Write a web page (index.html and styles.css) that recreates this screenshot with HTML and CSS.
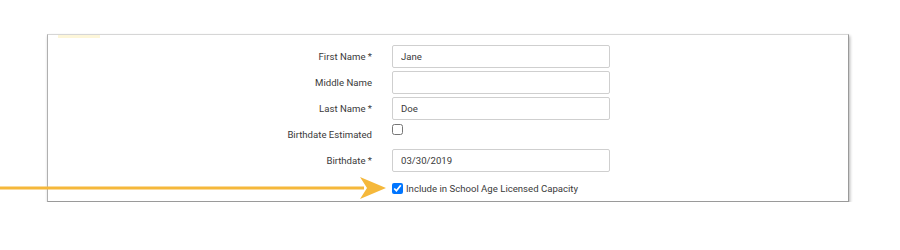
FILE: index.html
```html
<!DOCTYPE html>
<html lang="en">

<head>
    <meta charset="UTF-8">
    <meta name="viewport" content="width=device-width, initial-scale=1.0">
    <title>Child Details</title>
    <link rel="stylesheet" href="styles.css">
</head>

<body>
    <div class="card">
        <div class="tab-highlight"></div>

        <form class="child-form">
            <div class="form-row">
                <label for="firstName">First Name *</label>
                <input type="text" id="firstName" value="Jane">
            </div>
            <div class="form-row">
                <label for="middleName">Middle Name</label>
                <input type="text" id="middleName">
            </div>
            <div class="form-row">
                <label for="lastName">Last Name *</label>
                <input type="text" id="lastName" value="Doe">
            </div>
            <div class="form-row check-row">
                <label for="estimated">Birthdate Estimated</label>
                <input type="checkbox" id="estimated">
            </div>
            <div class="form-row">
                <label for="birthdate">Birthdate *</label>
                <input type="text" id="birthdate" value="03/30/2019">
            </div>
            <div class="form-row capacity-row">
                <span class="spacer"></span>
                <label class="inline-check">
                    <input type="checkbox" checked>
                    Include in School Age Licensed Capacity
                </label>
            </div>
        </form>
    </div>

    <!-- annotation arrow -->
    <svg class="pointer" width="390" height="30" viewBox="0 0 390 30">
        <line x1="0" y1="14" x2="364" y2="14" stroke="#F5B83B" stroke-width="3" />
        <polygon points="360,3 386,14 360,25 367,14" fill="#F5B83B" />
    </svg>
</body>

</html>
```

FILE: styles.css
```css
:root {
    --text-color: #3a3a3a;
    --input-border: #cfcfcf;
    --arrow-color: #F5B83B;
    --roboto-font: Roboto, 'Liberation Sans', sans-serif;
}

body {
    margin: 0;
    background: #ffffff;
    font-family: var(--roboto-font);
    color: var(--text-color);
}

.card {
    position: relative;
    margin: 34px 0 0 47px;
    width: 800px;
    height: 166px;
    border: 1px solid #d6d6d6;
    border-right-color: #9a9a9a;
    border-bottom-color: #9a9a9a;
    border-left-color: #b0b0b0;
    box-shadow: 1px 2px 3px rgba(0, 0, 0, 0.3);
    background: #ffffff;
}

.tab-highlight {
    position: absolute;
    top: 0;
    left: 10px;
    width: 42px;
    height: 3px;
    background: #fdf6d9;
}

.child-form {
    display: flex;
    flex-direction: column;
    gap: 3px;
    padding-top: 10px;
}

.form-row {
    display: flex;
    align-items: center;
    gap: 20px;
    height: 23px;
}

.form-row > label,
.spacer {
    width: 324px;
    flex: none;
    text-align: right;
    font-size: 9.6px;
}

input[type="text"] {
    box-sizing: border-box;
    width: 218px;
    height: 23px;
    margin: 0;
    padding: 0 8px;
    border: 1px solid var(--input-border);
    border-radius: 2px;
    font-family: inherit;
    font-size: 9.6px;
    color: var(--text-color);
}

input[type="checkbox"] {
    width: 11px;
    height: 11px;
    margin: 0;
}

.check-row {
    align-items: flex-start;
    height: 22px;
    margin-top: 1px;
}

.check-row > label {
    line-height: 22px;
}

.capacity-row {
    margin-top: 6px;
    height: 14px;
}

.inline-check {
    display: flex;
    align-items: center;
    gap: 3px;
    font-size: 9.6px;
}

.pointer {
    position: absolute;
    left: 0;
    top: 174px;
}
```
